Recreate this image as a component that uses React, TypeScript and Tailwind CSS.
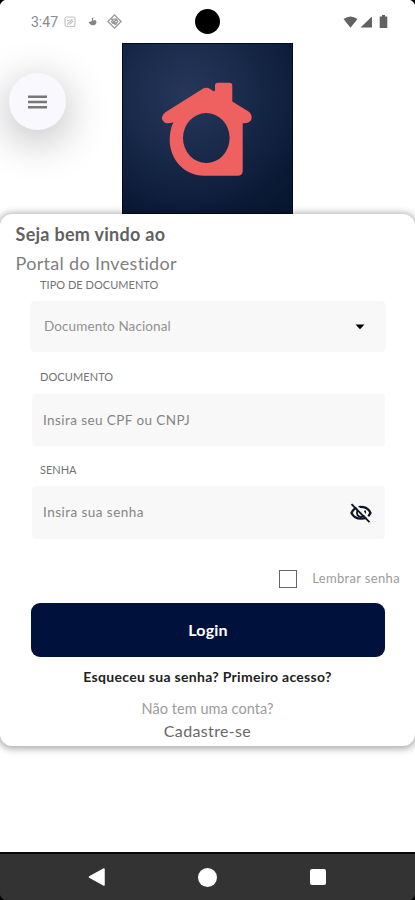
import React from 'react';

const Corner: React.FC<{ className: string }> = ({ className }) => (
  <svg className={`absolute w-[5px] h-[5px] ${className}`} viewBox="0 0 6 6">
    <path d="M0 0h6Q1.5 1.5 0 6z" fill="#000" />
  </svg>
);

const StatusBar: React.FC = () => (
  <div className="relative flex items-center h-[43px] pl-[31px] pr-[27px] shrink-0">
    <span className="w-[27px] pt-[1px] text-[14px] leading-none text-[#8a8a8a] font-['Roboto'] whitespace-nowrap">3:47</span>
    <svg className="ml-[6px] w-[12px] h-[12px]" viewBox="0 0 12 12" fill="none" stroke="#c4c4c4" strokeWidth="1.2">
      <rect x="1" y="1" width="10" height="9.5" rx="2" />
      <path d="M3 8.5L8.5 3M5.5 8.5L9 5M3 4.5h2.5" />
    </svg>
    <svg className="ml-[12px] w-[9px] h-[9px]" viewBox="0 0 9 9" fill="#858585">
      <path d="M0.5 4.5Q2 5.300 4 4V1L5.2 0.5V3.5L7.5 3 8.5 5Q8.3 8 5.3 8.2 1.5 8.3 .5 4.5z" />
    </svg>
    <svg className="ml-[10px] w-[15px] h-[15px]" viewBox="0 0 15 15" fill="none" stroke="#999" strokeWidth="1.3">
      <path d="M7.5 .9L14.1 7.5 7.5 14.1 .9 7.5z" />
      <path d="M4.2 5.2L9.8 10.2M5 9.5l5-4.5M5 5.2h4.5l1.2 2.5-2.5 2.6L4.6 8z" />
    </svg>
    <div className="absolute left-[195px] top-[9px] w-[25px] h-[25px] rounded-full bg-black" />
    <svg className="ml-auto w-[15px] h-[12px]" viewBox="0 0 15 12" fill="#626262">
      <path d="M.5 3Q7.500-2.200 14.500 3L7.500 11.800z" />
    </svg>
    <svg className="ml-[2px] w-[13px] h-[12px]" viewBox="0 0 13 12" fill="#626262">
      <path d="M12 .5V11.500H.5z" />
    </svg>
    <svg className="ml-[6px] w-[9px] h-[13px]" viewBox="0 0 9 13" fill="#626262">
      <path d="M3 0h3v1.500h2.300V13H.7V1.500H3z" />
    </svg>
  </div>
);

const Logo: React.FC = () => (
  <div className="w-[171px] h-[171px] border border-[#020924] bg-[radial-gradient(circle_at_38%_30%,#26385a_0%,#1a2b4c_35%,#0a1a35_78%,#07152e_100%)]">
    <svg className="w-[169px] h-[169px]" viewBox="1 1 169 169">
      <path
        fill="#ee6160"
        fillRule="evenodd"
        d="M43 69.500L80 46.200Q84 43.500 88.500 46.200L91.500 48.300Q93 48.500 93 47V42.500Q93 39.700 96 39.700H107.300Q110.300 39.700 110.300 42.500V58.500L126.500 68.500Q130.500 71.500 129.500 76Q127.500 80.800 120.700 80.300V128Q120.700 132.700 115.500 132.700H82C62 132.700 47.700 116 47.700 97Q47.700 86.500 51.500 79.300Q46 81.300 42.500 79.500Q37 75 43 69.500zM84.300 70A23.300 25 0 1 0 84.300 120A23.300 25 0 1 0 84.300 70z"
      />
    </svg>
  </div>
);

const Label: React.FC<{ children: React.ReactNode; className: string }> = ({ children, className }) => (
  <label className={`block pl-[10px] h-[14px] text-[11px] leading-[14px] text-[#737373] whitespace-nowrap ${className}`}>
    {children}
  </label>
);

const LoginCard: React.FC = () => (
  <main className="relative h-[532px] shrink-0 rounded-[12px] bg-white pt-[8px] shadow-[0_1px_7px_2px_rgba(0,0,0,0.32)]">
    <h1 className="pl-[15.500px] h-[24px] leading-[24px] text-[18px] font-bold text-[#626262] tracking-[0.28px]">Seja bem vindo ao</h1>
    <h2 className="pl-[15.500px] mt-[5px] h-[24px] leading-[24px] text-[18px] text-[#808080] tracking-[0.32px]">Portal do Investidor</h2>

    <form className="flex flex-col px-[30px]">
      <Label className="mt-[3px] tracking-[0.03px]">TIPO DE DOCUMENTO</Label>
      <div className="mt-[9px] h-[51px] w-[356px] rounded-[5px] bg-[#f8f8f8] flex items-center justify-between pl-[14px] pr-[20px]">
        <span className="text-[13.500px] text-[#929292] tracking-[0.1px]">Documento Nacional</span>
        <svg className="w-[12px] h-[6px]" viewBox="0 0 12 6">
          <path d="M1.500 .5h9L6 5.300z" fill="#000" />
        </svg>
      </div>

      <Label className="mt-[18px] tracking-[0.08px]">DOCUMENTO</Label>
      <div className="mt-[10px] ml-[2px] h-[52px] w-[353px] rounded-[4px] bg-[#f8f8f8] flex items-center pl-[11px]">
        <span className="text-[13.500px] text-[#858585] tracking-[0.42px]">Insira seu CPF ou CNPJ</span>
      </div>

      <Label className="mt-[17px]">SENHA</Label>
      <div className="mt-[9px] ml-[2px] h-[53px] w-[353px] rounded-[4px] bg-[#f8f8f8] flex items-center justify-between pl-[11px] pr-[12px]">
        <span className="text-[13.500px] text-[#858585] tracking-[0.46px]">Insira sua senha</span>
        <svg className="w-[24px] h-[22px]" viewBox="0 0 24 22" fill="none" stroke="#111525">
          <path d="M2.500 11C6 2.700 18 2.700 21.500 11C18 18.500 6 18.500 2.500 11z" strokeWidth="2.300" />
          <path d="M8.300 8.200Q6.800 14.500 12 15Q17.300 14.500 16 8.500" strokeWidth="1.800" />
          <path d="M4.700 1.200L22.200 18.700" stroke="#f8f8f8" strokeWidth="2.200" />
          <path d="M2.500 2.200L20.500 20.200" strokeWidth="1.900" />
        </svg>
      </div>
    </form>

    <div className="mt-[30px] h-[20px] flex items-center justify-end pr-[15px]">
      <span className="w-[18px] h-[18px] border border-[#666] mr-[15px]" />
      <span className="pb-[1px] text-[13px] text-[#9c9c9c] tracking-[0.34px]">Lembrar senha</span>
    </div>

    <button className="block mt-[14px] ml-[31px] w-[354px] h-[54px] rounded-[9px] bg-[#00113b] text-white text-[16px] font-bold tracking-[0.2px]">
      Login
    </button>

    <div className="flex flex-col items-center text-center whitespace-nowrap">
      <p className="mt-[10px] h-[20px] leading-[20px] text-[14px] font-bold text-[#222] tracking-[0.3px]">Esqueceu sua senha? Primeiro acesso?</p>
      <p className="mt-[12px] h-[20px] leading-[20px] text-[14.500px] text-[#9c9c9c] tracking-[0.05px]">Não tem uma conta?</p>
      <p className="mt-[2px] h-[20px] leading-[20px] text-[16px] text-[#686868] tracking-[0.35px]">Cadastre-se</p>
    </div>
  </main>
);

const NavBar: React.FC = () => (
  <nav className="mt-auto h-[48px] shrink-0 border-t-2 border-[#080808] bg-[#333] flex items-center pl-[88px]">
    <svg className="w-[18px] h-[20px]" viewBox="0 0 18 20">
      <path d="M1.500 10L16 2v16z" fill="#fff" stroke="#fff" strokeWidth="1.500" strokeLinejoin="round" />
    </svg>
    <span className="ml-[92px] w-[19px] h-[19px] rounded-full bg-white" />
    <span className="ml-[93px] w-[16px] h-[16px] rounded-[2px] bg-white" />
  </nav>
);

export default function App() {
  return (
    <div className="relative w-[415px] h-[900px] overflow-hidden bg-white flex flex-col font-['Lato',sans-serif]">
      <StatusBar />
      <header className="relative h-[171px] shrink-0 flex justify-center">
        <button className="absolute left-[9px] top-[30px] w-[57px] h-[57px] rounded-full bg-[#f8f8fe] flex items-center justify-center shadow-[0_10px_40px_4px_rgba(0,0,0,0.23)]">
          <svg className="w-[19px] h-[14px]" viewBox="0 0 19 14" fill="#777">
            <path d="M0 .5h19v2.500H0zM0 5.700h19v2.500H0zM0 11h19v2.500H0z" />
          </svg>
        </button>
        <Logo />
      </header>
      <LoginCard />
      <NavBar />
      <Corner className="left-0 top-0" />
      <Corner className="right-0 top-0 rotate-90" />
      <Corner className="left-0 bottom-0 -rotate-90" />
      <Corner className="right-0 bottom-0 rotate-180" />
    </div>
  );
}
